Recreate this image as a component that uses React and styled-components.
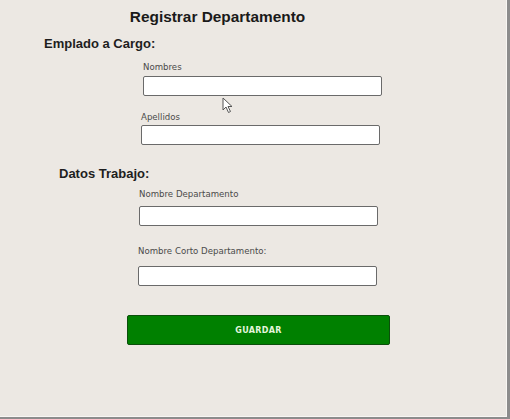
import React from 'react';
import styled, { createGlobalStyle } from 'styled-components';

const GlobalStyle = createGlobalStyle`
  html, body {
    margin: 0;
    padding: 0;
    background: #ece8e3;
  }
`;

const Frame = styled.div`
  position: relative;
  box-sizing: border-box;
  width: 510px;
  height: 419px;
  padding-top: 7px;
  display: flex;
  flex-direction: column;
  background: #ece8e3;
  border-right: 3px solid #8c8c8c;
  border-bottom: 2px solid #8c8c8c;
  box-shadow: inset -1px -1px 0 #f8f6f3;
  font-family: "Liberation Sans", Arial, sans-serif;
`;

const Title = styled.h1`
  margin: 0;
  width: 435px;
  text-align: center;
  font-size: 15.4px;
  line-height: 20px;
  font-weight: bold;
  color: #1a1a1a;
`;

const Heading = styled.h2`
  margin: ${p => p.$top}px 0 0 ${p => p.$left}px;
  font-size: 13px;
  line-height: 16px;
  font-weight: bold;
  color: #1e1e1e;
`;

const Field = styled.div`
  display: flex;
  flex-direction: column;
  margin: ${p => p.$top}px 0 0 ${p => p.$left}px;
`;

const Label = styled.label`
  font-family: "DejaVu Sans", sans-serif;
  font-size: 8.6px;
  line-height: 12px;
  color: #4a4a4a;
  margin-bottom: ${p => p.$gap}px;
`;

const Input = styled.div`
  box-sizing: border-box;
  width: 239px;
  height: 20px;
  background: #fff;
  border: 1.5px solid #6a6a6a;
  border-radius: 2px;
`;

const Button = styled.button`
  box-sizing: border-box;
  margin: 29px 0 0 127px;
  width: 263px;
  height: 30px;
  background: #008000;
  border: 1.5px solid #0b4f0b;
  border-radius: 2px;
  color: #e3f5dc;
  font-family: "DejaVu Sans", sans-serif;
  font-size: 8px;
  font-weight: bold;
  letter-spacing: 0.3px;
  cursor: pointer;
`;

const Cursor = styled.svg`
  position: absolute;
  left: 222px;
  top: 97px;
`;

export default function App() {
  return (
    <>
      <GlobalStyle />
      <Frame>
        <Title>Registrar Departamento</Title>
        <Heading $top={9} $left={44}>Emplado a Cargo:</Heading>
        <Field $top={9} $left={143}>
          <Label $gap={3}>Nombres</Label>
          <Input />
        </Field>
        <Field $top={15} $left={141}>
          <Label $gap={2}>Apellidos</Label>
          <Input />
        </Field>
        <Heading $top={21} $left={59}>Datos Trabajo:</Heading>
        <Field $top={6} $left={139}>
          <Label $gap={6}>Nombre Departamento</Label>
          <Input />
        </Field>
        <Field $top={19} $left={138}>
          <Label $gap={9}>Nombre Corto Departamento:</Label>
          <Input />
        </Field>
        <Button>GUARDAR</Button>
        <Cursor width="12" height="17" viewBox="0 0 12 17">
          <path d="M1 1 L1 13 L4 10 L6.5 15.5 L8.5 14.5 L6 9.5 L10 9.5 Z" fill="#fff" stroke="#555" strokeWidth="1" strokeLinejoin="round" />
        </Cursor>
      </Frame>
    </>
  );
}
